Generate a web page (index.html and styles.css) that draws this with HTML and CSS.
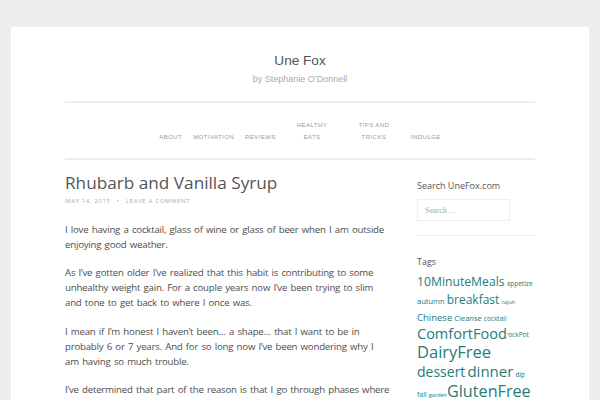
FILE: index.html
```html
<!DOCTYPE html>
<html lang="en">
<head>
<meta charset="utf-8">
<title>Une Fox</title>
<link rel="stylesheet" href="styles.css">
</head>
<body>
<div class="page">
  <header class="site-header">
    <h1 class="site-title">Une Fox</h1>
    <p class="site-desc">by Stephanie O’Donnell</p>
  </header>
  <nav class="nav">
    <ul class="menu">
      <li class="item">About</li>
      <li class="item">Motivation</li>
      <li class="item">Reviews</li>
      <li class="item item-healthy">Healthy Eats</li>
      <li class="item item-tips">Tips and Tricks</li>
      <li class="item">Indulge</li>
    </ul>
  </nav>
  <div class="main">
    <article class="post">
      <h2 class="post-title">Rhubarb and Vanilla Syrup</h2>
      <div class="post-meta">May 14, 2015 <span class="sep">•</span> Leave a comment</div>
      <div class="post-body">
        <p>I love having a cocktail, glass of wine or glass of beer when I am outside enjoying good weather.</p>
        <p>As I’ve gotten older I’ve realized that this habit is contributing to some unhealthy weight gain. For a couple years now I’ve been trying to slim and tone to get back to where I once was.</p>
        <p>I mean if I’m honest I haven’t been… a shape… that I want to be in probably 6 or 7 years. And for so long now I’ve been wondering why I am having so much trouble.</p>
        <p>I’ve determined that part of the reason is that I go through phases where I really watch what I eat and drink, and then phases where I don’t.</p>
      </div>
    </article>
    <aside class="sidebar">
      <section class="widget widget-search">
        <h3 class="widget-title">Search UneFox.com</h3>
        <input class="search-field" type="search" placeholder="Search …">
      </section>
      <section class="widget widget-tags">
        <h3 class="widget-title">Tags</h3>
        <div class="tagcloud">
          <a class="tag t13">10MinuteMeals</a> <a class="tag t6">appetize</a>
          <a class="tag t8">autumn</a> <a class="tag t12">breakfast</a> <a class="tag t5">cajun</a>
          <a class="tag t9">Chinese</a> <a class="tag t7">Cleanse</a> <a class="tag t6">cocktail</a>
          <a class="tag t15">ComfortFood</a><a class="tag t6 clipped">CrockPot</a>
          <a class="tag t17">DairyFree</a>
          <a class="tag t14">dessert</a> <a class="tag t15b">dinner</a> <a class="tag t6">dip</a>
          <a class="tag t7s">fall</a> <a class="tag t5">garden</a><a class="tag t16">GlutenFree</a>
        </div>
      </section>
    </aside>
  </div>
</div>
</body>
</html>
```
FILE: styles.css
```css
* { box-sizing: border-box; }
html, body { margin: 0; padding: 0; }
body {
  background: #eeeeee;
  font-family: "Open Sans", "DejaVu Sans", sans-serif;
  color: #555;
  height: 400px;
  overflow: hidden;
}
.page {
  margin: 27px 11px 0;
  background: #fff;
  padding: 24px 54px 40px;
  min-height: 500px;
}
.site-header {
  text-align: center;
  padding-bottom: 16px;
  border-bottom: 2px solid #eeeeee;
}
.site-title {
  margin: 0;
  font-family: "Liberation Sans", Arial, sans-serif;
  font-weight: normal;
  font-size: 13.6px;
  line-height: 20px;
  color: #555;
}
.site-desc {
  margin: 2px 0 0;
  font-family: "Liberation Sans", Arial, sans-serif;
  font-size: 9px;
  line-height: 12px;
  color: #aaa;
}
.nav {
  padding: 16px 0 15px;
  border-bottom: 2px solid #eeeeee;
}
.menu {
  list-style: none;
  margin: 0;
  padding: 0;
  display: flex;
  justify-content: center;
  align-items: flex-end;
}
.item {
  padding: 0 5.5px;
  font-family: "Liberation Sans", Arial, sans-serif;
  font-size: 6px;
  line-height: 12px;
  letter-spacing: 0.45px;
  text-transform: uppercase;
  color: #999;
  text-align: center;
}
.item-healthy { width: 61px; padding: 0 12px; }
.item-tips { width: 63px; padding: 0 13px; }
.main {
  display: grid;
  grid-template-columns: 325px 118px;
  column-gap: 27px;
  padding-top: 12px;
}
.post-title {
  margin: 0;
  font-weight: normal;
  font-size: 17.2px;
  line-height: 22px;
  color: #555;
}
.post-meta {
  margin-top: 2px;
  font-size: 6px;
  line-height: 10px;
  letter-spacing: 0.65px;
  text-transform: uppercase;
  color: #aaa;
}
.post-meta .sep { margin: 0 4px; }
.post-body { margin-top: 15.5px; }
.post-body p {
  margin: 0 0 13.5px;
  font-size: 9.65px;
  line-height: 15px;
  word-spacing: 1px;
  letter-spacing: -0.2px;
  color: #4d4d4d;
}
.sidebar { padding-top: 8px; }
.widget-title {
  margin: 0;
  font-weight: normal;
  font-size: 9px;
  line-height: 12px;
  color: #555;
}
.widget-search {
  padding-bottom: 14px;
  border-bottom: 1px solid #eeeeee;
}
.search-field {
  display: block;
  margin-top: 7px;
  width: 93px;
  height: 22px;
  border: 1px solid #eeeeee;
  padding: 0 7px;
  font-family: "Liberation Serif", serif;
  font-size: 8px;
  color: #aaa;
  background: #fff;
  outline: none;
}
.search-field::placeholder { color: #aaa; }
.widget-tags { padding-top: 20px; }
.widget-tags .widget-title { margin-bottom: 6px; }
.tagcloud {
  font-size: 8px;
  line-height: 17.6px;
  color: #267c7a;
}
.tag {
  color: #267c7a;
  line-height: 1;
  white-space: nowrap;
}
.t5 { font-size: 5.5px; }
.t6 { font-size: 6.5px; }
.t7 { font-size: 7.5px; }
.t7s { font-size: 7px; }
.t8 { font-size: 7.5px; }
.t9 { font-size: 9.5px; }
.t12 { font-size: 12px; }
.t13 { font-size: 12.2px; }
.t14 { font-size: 14px; }
.t15 { font-size: 14.5px; }
.t15b { font-size: 15px; }
.t16 { font-size: 16.2px; }
.t17 { font-size: 16.5px; }
.clipped {
  display: inline-block;
  width: 22px;
  overflow: hidden;
  direction: rtl;
  vertical-align: baseline;
}
```
